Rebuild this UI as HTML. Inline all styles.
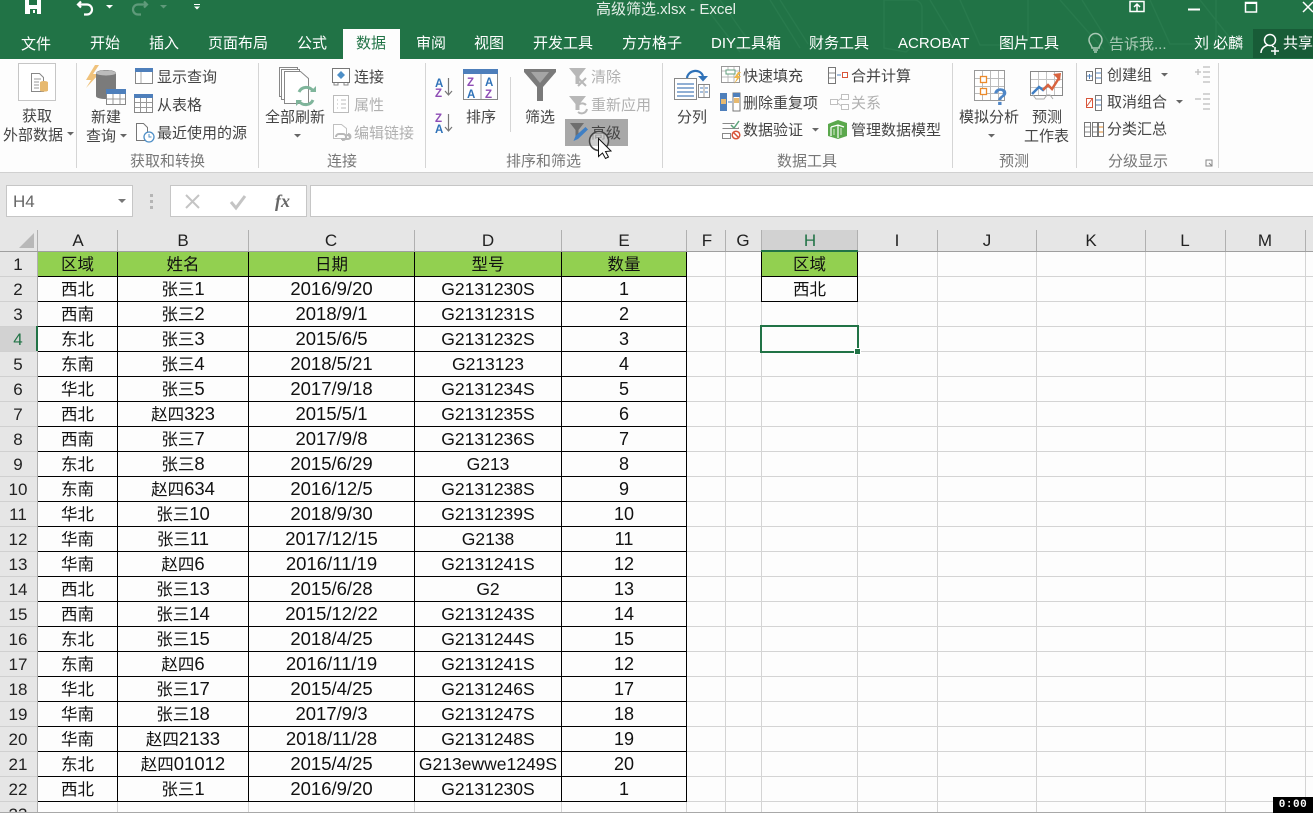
<!DOCTYPE html>
<html lang="zh"><head><meta charset="utf-8"><title>高级筛选.xlsx - Excel</title>
<style>
html,body{margin:0;padding:0;width:1313px;height:813px;overflow:hidden;background:#fdfdfd}
body{position:relative;font-family:"Liberation Sans","Noto Sans CJK SC",sans-serif}
.a{position:absolute}
svg.full{position:absolute;left:0;top:0}
svg text{font-family:"Liberation Sans","Noto Sans CJK SC",sans-serif}
.t{font-size:15px;fill:#444}
.g{font-size:15px;fill:#b0b0b0}
.l{font-size:15px;fill:#777}
.w{font-size:15px;fill:#fff}
.h{font-size:17px;fill:#222;text-anchor:middle}
table{border-collapse:separate;border-spacing:0;table-layout:fixed;position:absolute}
tr{height:25px}
td{box-sizing:border-box;height:25px;padding:0;border-right:1px solid #000;border-bottom:1px solid #000;text-align:center;vertical-align:middle;line-height:20px;font-size:18.500px;color:#111;white-space:nowrap;overflow:hidden}
td b{font-weight:normal;font-size:16.500px;line-height:16px;font-family:"Noto Sans CJK SC",sans-serif}
td.d{font-size:17.500px}
td.e{font-size:18px}
tr.top td{background:#92d050}
</style></head><body>
<div class="a" style="left:0;top:0;width:1313px;height:59px;background:#217346"></div>
<div class="a" style="left:343px;top:29px;width:57px;height:30px;background:#fdfdfd"></div>
<div class="a" style="left:1253px;top:29px;width:60px;height:29px;background:#185c37"></div>
<div class="a" style="left:0;top:59px;width:1313px;height:113px;background:#fdfdfd"></div>
<div class="a" style="left:0;top:172px;width:1313px;height:59px;background:#e6e6e6;border-top:1px solid #d0d0d0;box-sizing:border-box"></div>
<div class="a" style="left:6px;top:185px;width:127px;height:32px;background:#fff;border:1px solid #c6c6c6;box-sizing:border-box"></div>
<div class="a" style="left:170px;top:185px;width:137px;height:32px;background:#fff;border:1px solid #c6c6c6;box-sizing:border-box"></div>
<div class="a" style="left:310px;top:185px;width:1003px;height:32px;background:#fff;border:1px solid #c6c6c6;border-right:0;box-sizing:border-box"></div>
<div class="a" style="left:0;top:251px;width:37px;height:561px;background:#e6e6e6"></div>
<div class="a" style="left:0;top:230px;width:1313px;height:21px;background:#e6e6e6"></div>
<div class="a" style="left:761px;top:230px;width:97px;height:21px;background:#d2d2d2"></div>
<div class="a" style="left:0;top:326px;width:37px;height:25px;background:#d2d2d2"></div>
<div class="a" style="left:38px;top:252px;width:1275px;height:560px;background:repeating-linear-gradient(to bottom,transparent 0,transparent 24px,#d4d4d4 24px,#d4d4d4 25px)"></div>

<svg class="full" width="1313" height="813" viewBox="0 0 1313 813">
<!-- title texture -->
<g fill="none" stroke="#287a4d" stroke-width="1.500">
<path d="M770 0L800 48M780 0L808 44M884 0h30a8 8 0 0 1 8 8v30l-16 14-22-4zM930 0l30 50M960 0l20 45h40a8 8 0 0 0 8-8V0M1060 0l44 50M1082 0l30 48M1150 0l20 44h40a6 6 0 0 0 6-6V0M1200 0l30 38M700 0l40 52M720 0l28 40"/>
</g>
<!-- QAT -->
<path d="M25 0h16v14H25z" fill="#fff"/><path d="M29 0h8v5h-8zM30 9h7v5h-7z" fill="#217346"/><rect x="33" y="10" width="2" height="3" fill="#fff"/>
<path d="M81 1.500l-3 3 3 3M79 4.500h8a5 5 0 0 1 0 10h-3" fill="none" stroke="#fff" stroke-width="2.200"/>
<path d="M106 5h7l-3.500 3.500z" fill="#fff"/>
<path d="M144 1.500l3 3-3 3M146 4.500h-8a5 5 0 0 0 0 10h3" fill="none" stroke="#5f9a7a" stroke-width="2.200"/>
<path d="M160 5h7l-3.500 3.500z" fill="#5f9a7a"/>
<path d="M194 4h6v1h-6zM194 6.500h6l-3 3z" fill="#fff"/>
<text x="596" y="14" style="font-size:15px;fill:#e6efe9">高级筛选.xlsx - Excel</text>
<!-- window controls -->
<g fill="none" stroke="#fff" stroke-width="1.500"><rect x="1130" y="1.500" width="14" height="10"/><path d="M1137 11V5M1134 7l3-3 3 3"/><rect x="1245.500" y="2.500" width="11" height="9.500"/><path d="M1303 2l10 10M1313 2l-10 10"/></g>
<rect x="1188" y="8.500" width="12" height="2" fill="#fff"/><rect x="1245" y="2" width="12" height="2" fill="#fff"/>
<!-- tabs -->
<text class="w" x="21" y="49">文件</text><text class="w" x="90" y="48">开始</text><text class="w" x="149" y="48">插入</text><text class="w" x="208" y="48">页面布局</text><text class="w" x="297" y="48">公式</text>
<text x="356" y="48" style="font-size:15px;fill:#217346">数据</text>
<text class="w" x="416" y="48">审阅</text><text class="w" x="474" y="48">视图</text><text class="w" x="533" y="48">开发工具</text><text class="w" x="622" y="48">方方格子</text><text class="w" x="711" y="48">DIY工具箱</text><text class="w" x="809" y="48">财务工具</text><text class="w" x="898" y="48">ACROBAT</text><text class="w" x="999" y="48">图片工具</text>
<text x="1109" y="49" style="font-size:15px;fill:#a9c9b5">告诉我...</text>
<text class="w" x="1194" y="48">刘 必麟</text><text class="w" x="1283" y="48">共享</text>
<path d="M1092 48c0-3-3-4-3-8a6.500 6.500 0 0 1 13 0c0 4-3 5-3 8zM1093 50h5M1094 52h3" fill="none" stroke="#a9c9b5" stroke-width="1.500"/>
<g fill="none" stroke="#fff" stroke-width="1.500"><circle cx="1270" cy="40" r="5.500"/><path d="M1261 53c0-5 4-7 7-8M1272 46l2 1M1271 51h8M1275 47v8"/></g>
<!-- separators -->
<g stroke="#d5d5d5"><path d="M76.500 63v105M258.500 63v105M425.500 63v105M662.500 63v105M952.500 63v105M1076.500 63v105M1218.500 63v105M510.500 77v55"/></g>
<!-- group labels -->
<text class="l" x="130" y="166">获取和转换</text><text class="l" x="327" y="166">连接</text><text class="l" x="506" y="166">排序和筛选</text><text class="l" x="777" y="166">数据工具</text><text class="l" x="999" y="166">预测</text><text class="l" x="1108" y="166">分级显示</text>
<path d="M1206 160h6v6h-6zM1209 163l3 3" fill="none" stroke="#888"/>
<!-- ribbon text -->
<text class="t" x="22" y="121">获取</text><text class="t" x="3" y="140">外部数据</text><path d="M67 132h7l-3.500 3.500z" fill="#666"/>
<text class="t" x="91" y="122">新建</text><text class="t" x="86" y="141">查询</text><path d="M120 134h7l-3.500 3.500z" fill="#666"/>
<text class="t" x="157" y="82">显示查询</text><text class="t" x="157" y="110">从表格</text><text class="t" x="157" y="138">最近使用的源</text>
<text class="t" x="265" y="122">全部刷新</text><path d="M294 134h7l-3.500 3.500z" fill="#666"/>
<text class="t" x="354" y="82">连接</text><text class="g" x="354" y="110">属性</text><text class="g" x="354" y="138">编辑链接</text>
<text class="t" x="466" y="122">排序</text><text class="t" x="525" y="122">筛选</text>
<text class="g" x="591" y="82">清除</text><text class="g" x="591" y="110">重新应用</text>
<rect x="565" y="119" width="63" height="27" fill="#a8a8a8"/><text x="591" y="138" style="font-size:15px;fill:#444">高级</text>
<text class="t" x="677" y="122">分列</text>
<text class="t" x="743" y="81">快速填充</text><text class="t" x="743" y="108">删除重复项</text><text class="t" x="743" y="135">数据验证</text><path d="M812 128h7l-3.500 3.500z" fill="#666"/>
<text class="t" x="851" y="81">合并计算</text><text class="g" x="851" y="108">关系</text><text class="t" x="851" y="135">管理数据模型</text>
<text class="t" x="959" y="122">模拟分析</text><path d="M988 134h7l-3.500 3.500z" fill="#666"/>
<text class="t" x="1032" y="122">预测</text><text class="t" x="1024" y="141">工作表</text>
<text class="t" x="1107" y="80">创建组</text><path d="M1161 73h7l-3.500 3.500z" fill="#666"/>
<text class="t" x="1107" y="107">取消组合</text><path d="M1176 100h7l-3.500 3.500z" fill="#666"/>
<text class="t" x="1107" y="134">分类汇总</text>
<!-- get external -->
<rect x="18.500" y="63.500" width="37" height="37" fill="#fff" stroke="#c6c6c6"/>
<path d="M31.500 73.500h8l4 4v14h-12z" fill="#fff" stroke="#888"/><path d="M34 79h7M34 82h5M34 85h5M34 88h5" stroke="#999"/>
<path d="M40 82.500c0-2 8-2 8 0v8c0 1.500-8 1.500-8 0z" fill="#e7b96f"/>
<!-- new query -->
<path d="M95 65l-9 15h5l-5 8 13-14h-6l6-9z" fill="#f0c27b"/>
<path d="M96 73c0-4 20-4 20 0v23c0 4-20 4-20 0z" fill="#7b7b7b"/><ellipse cx="106" cy="73" rx="10" ry="2.500" fill="#bbb"/>
<rect x="106.500" y="89.500" width="19" height="15" fill="#fff" stroke="#888"/><rect x="106" y="89" width="20" height="5" fill="#4e7fbb"/><path d="M113 94v10M120 94v10M107 99h18" stroke="#999"/>
<!-- show query -->
<rect x="135.500" y="68.500" width="17" height="15" fill="#fff" stroke="#888"/><rect x="135" y="68" width="18" height="4" fill="#4e7fbb"/><path d="M141 72v11" stroke="#aaa"/>
<!-- from table -->
<rect x="134.500" y="94.500" width="18" height="18" fill="#fff" stroke="#888"/><path d="M140.500 98v14M146.500 98v14M135 102.500h17M135 107.500h17" stroke="#999"/><rect x="134" y="94" width="19" height="4" fill="#4e7fbb"/>
<!-- recent -->
<path d="M136.500 123.500h7l4 4v13h-11z" fill="#fff" stroke="#777"/><circle cx="149" cy="137" r="5" fill="#fff" stroke="#4e8fc7" stroke-width="1.300"/><path d="M149 134v3h2.500" fill="none" stroke="#4e8fc7"/>
<!-- refresh all -->
<g fill="#fff" stroke="#888"><path d="M279.500 67.500h18v29h-18z"/><path d="M281.500 69.500h18v30h-18z"/><path d="M284.500 71.500h16l8 7v25h-24z"/></g>
<path d="M299 92a8 8 0 0 1 14-1M313 100a8 8 0 0 1-14 1" fill="none" stroke="#7fb59b" stroke-width="3"/><path d="M310 92h6v-6zM302 100h-6v6z" fill="#7fb59b"/>
<!-- connections -->
<rect x="332.500" y="68.500" width="17" height="14" fill="#fff" stroke="#777"/><path d="M341 71l4 4-4 4-4-4z" fill="#4e8fc7"/><path d="M334 83v2h4v-2M344 83v2h4v-2" fill="none" stroke="#888"/>
<rect x="333.500" y="95.500" width="15" height="17" fill="#fff" stroke="#bbb"/><path d="M337 100h1M341 100h5M337 104h1M341 104h5M337 108h1M341 108h5" stroke="#bbb"/>
<path d="M333.500 124.500h8l5 4v10h-13z" fill="#fff" stroke="#c0c0c0"/><path d="M336 137a3 3 0 0 1 3-3h4a3 3 0 0 1 0 6h-1M350 138a3 3 0 0 0-3-3" fill="none" stroke="#b8b8b8" stroke-width="2"/><path d="M341 139h7a2.500 2.500 0 0 0 0-5" fill="none" stroke="#b8b8b8" stroke-width="2"/>
<!-- sort small -->
<text x="435" y="87" style="fill:#2f72b8;font-size:11.500px;font-weight:bold">A</text><text x="435" y="97" style="fill:#8e4db5;font-size:11.500px;font-weight:bold">Z</text><text x="435" y="122" style="fill:#8e4db5;font-size:11.500px;font-weight:bold">Z</text><text x="435" y="133" style="fill:#2f72b8;font-size:11.500px;font-weight:bold">A</text>
<path d="M448.500 78v17M445 91l3.500 4 3.500-4M448.500 114v17M445 127l3.500 4 3.500-4" fill="none" stroke="#777" stroke-width="1.200"/>
<!-- sort big -->
<rect x="463.500" y="69.500" width="34" height="30" fill="#fff" stroke="#888"/><rect x="463" y="69" width="35" height="5" fill="#4e7fbb"/><path d="M481 74v25" stroke="#999"/>
<text x="467" y="86" style="fill:#8e4db5;font-size:11.500px;font-weight:bold">Z</text><text x="467" y="98" style="fill:#2f72b8;font-size:11.500px;font-weight:bold">A</text><text x="485" y="86" style="fill:#2f72b8;font-size:11.500px;font-weight:bold">A</text><text x="485" y="98" style="fill:#8e4db5;font-size:11.500px;font-weight:bold">Z</text>
<!-- filter -->
<path d="M524 69h32v3l-13 15v14h-6V87l-13-15z" fill="#7a7a7a"/><path d="M531 72h18l-9 11z" fill="#a5a5a5"/>
<path d="M569 68h17l-6.500 8v8h-4v-8z" fill="#b8b8b8"/><path d="M578 78l8 8M586 78l-8 8" stroke="#b8b8b8" stroke-width="2"/>
<path d="M569 96h17l-6.500 8v6h-4v-6z" fill="#b8b8b8"/><path d="M577 107a5.500 5.500 0 0 1 9-2M587 109a5.500 5.500 0 0 1-9 3" fill="none" stroke="#b8b8b8" stroke-width="2"/>
<path d="M570 123h14l-5.500 7v7h-3v-7z" fill="#6e6e6e"/><path d="M573.500 141l2-5 10-9 2.500 2.500-10 9.500z" fill="#3f7fc4"/>
<circle cx="599" cy="141" r="9.500" fill="#fff" fill-opacity=".45" stroke="#444" stroke-width="1.500"/>
<path d="M598.500 138.500v18l4-3.500 3 5.500 3-1.500-3-5.500 5.500-.5z" fill="#fff" stroke="#111" stroke-width="1"/>
<!-- text to columns -->
<rect x="674.500" y="78.500" width="22" height="21" fill="#fff" stroke="#888"/><path d="M677 84h17M677 88h17M677 92h17M677 96h17" stroke="#4e7fbb" stroke-width="1.200"/>
<rect x="698.500" y="84.500" width="11" height="13" fill="#fff" stroke="#888"/><path d="M704 85v12" stroke="#999"/><path d="M700 88h3M705 88h3M700 92h3M705 92h3" stroke="#4e7fbb"/>
<path d="M687 78c1-8 13-10 16-2" fill="none" stroke="#2f72b8" stroke-width="2.200"/><path d="M698 76h10l-5 5.500z" fill="#2f72b8"/>
<!-- flash fill -->
<rect x="721.500" y="66.500" width="18" height="16" fill="#fff" stroke="#999"/><path d="M722 71h17M722 77h17M728 67v15M734 67v15" stroke="#bbb"/><rect x="726" y="70" width="9" height="4" fill="#fff" stroke="#63a07f"/><path d="M738 72l-4 6h3l-3 6 7-8h-3l3-4z" fill="#eeb64a"/>
<!-- remove duplicates -->
<rect x="720" y="93" width="7" height="18" fill="#4e7fbb"/><rect x="721" y="99" width="5" height="5" fill="#e7b96f"/><rect x="733" y="93" width="7" height="18" fill="#fff" stroke="#777"/><rect x="733" y="93" width="7" height="4" fill="#4e7fbb"/><rect x="734" y="98" width="5" height="5" fill="#e7b96f"/><path d="M728 102h4" stroke="#4e7fbb"/>
<!-- validation -->
<path d="M722.500 123.500h12M722.500 128.500h16v-1M722.500 133.500h8v5h-8z" fill="none" stroke="#888"/><path d="M731 125l3 3 5-7" fill="none" stroke="#5ba37a" stroke-width="1.500"/><circle cx="736" cy="135" r="3.800" fill="#fff" stroke="#d8553a" stroke-width="1.500"/><path d="M733.500 132.500l5 5" stroke="#d8553a" stroke-width="1.500"/>
<!-- consolidate -->
<rect x="828.500" y="67.500" width="7" height="16" fill="#fff" stroke="#777"/><path d="M829 73h6M829 78h6" stroke="#888"/><path d="M837 75h4" stroke="#4e7fbb"/><rect x="842.500" y="72.500" width="5" height="5" fill="#fff" stroke="#d8553a"/>
<!-- relationships -->
<g fill="#fff" stroke="#c0c0c0"><rect x="830.500" y="99.500" width="7" height="5"/><rect x="841.500" y="94.500" width="7" height="5"/><rect x="841.500" y="104.500" width="7" height="5"/><path d="M837.500 101l4-3M837.500 103l4 3"/></g>
<!-- data model -->
<path d="M828 124l10-4 9 3v13l-9 3-10-3z" fill="#5ba84d"/><path d="M838 125v13M831 127l7-2 6 2M831 127v9" fill="none" stroke="#fff" stroke-width="1.200"/><path d="M834 129v6M841 128v7" stroke="#d8ecd0"/>
<!-- what-if -->
<rect x="974.500" y="70.500" width="30" height="30" fill="#fff" stroke="#999"/><path d="M982.500 71v29M990.500 71v29M998.500 71v29M975 78.500h29M975 86.500h29M975 93.500h29" stroke="#bbb"/>
<rect x="980.500" y="76.500" width="6" height="6" fill="#fff" stroke="#ec8a2b" stroke-width="1.300"/><rect x="980.500" y="88.500" width="6" height="6" fill="#fff" stroke="#ec8a2b" stroke-width="1.300"/>
<text x="993" y="105" style="font-size:24px;font-weight:bold;fill:#4e86c6">?</text>
<!-- forecast -->
<rect x="1030.500" y="71.500" width="32" height="24" fill="#fff" stroke="#888"/><path d="M1038.500 72v23M1046.500 72v23M1054.500 72v23M1031 79.500h31M1031 87.500h31" stroke="#c4c4c4"/><path d="M1033 95l3 4h8l3-4h3l3 4" fill="none" stroke="#aaa"/>
<path d="M1032 94l7-7 4 3 5-5" fill="none" stroke="#3f7fc4" stroke-width="2.500"/><path d="M1043 90l5-5 4 4 7-11" fill="none" stroke="#d8633f" stroke-width="2.500"/><path d="M1053 74l8-1-1 8z" fill="#d8633f"/>
<!-- outline -->
<g fill="#fff" stroke="#777"><rect x="1086.500" y="71.500" width="6" height="9"/><rect x="1095.500" y="68.500" width="6" height="15"/><rect x="1086.500" y="98.500" width="6" height="9" stroke="#d8553a"/><rect x="1095.500" y="95.500" width="6" height="15"/></g>
<path d="M1087 76h5M1089.500 74v5M1096 73h5M1096 78h5M1096 100h5M1096 105h5" stroke="#4e7fbb"/><path d="M1087 106l5-7" stroke="#d8553a"/>
<g fill="#fff" stroke="#777"><rect x="1084.500" y="122.500" width="6" height="14"/><rect x="1092.500" y="122.500" width="5" height="14"/><rect x="1098.500" y="122.500" width="5" height="14"/></g>
<path d="M1085 127h5M1085 132h5M1093 127h4M1093 132h4" stroke="#888"/><path d="M1099 127h4M1099 132h4" stroke="#e08a2b"/>
<path d="M1195 72h6M1198 69v6M1195 99h6M1203 67h7M1203 72h7M1203 77h7M1203 82h7M1203 94h7M1203 99h7M1203 104h7M1203 109h7" stroke="#bdbdbd" stroke-width="1.300"/>
<!-- formula bar -->
<text x="13" y="207" style="font-size:17px;fill:#666">H4</text><path d="M118 199h8l-4 4z" fill="#777"/>
<g fill="#b5b5b5"><rect x="150" y="194" width="3" height="3"/><rect x="150" y="200" width="3" height="3"/><rect x="150" y="206" width="3" height="3"/></g>
<path d="M186 195l13 13M199 195l-13 13" stroke="#c4c4c4" stroke-width="2"/><path d="M231 202l5 6 9-12" fill="none" stroke="#c4c4c4" stroke-width="3"/>
<text x="275" y="207" style="font-family:'Liberation Serif',serif;font-size:18px;font-style:italic;font-weight:bold;fill:#666">fx</text>
<!-- headers -->
<path d="M34 233v15H19z" fill="#b8b8b8"/>
<g stroke="#b0b0b0"><path d="M37.500 230v21M117.500 230v21M248.500 230v21M414.500 230v21M561.500 230v21M686.500 230v21M725.500 230v21M761.500 230v21M857.500 230v21M937.500 230v21M1036.500 230v21M1145.500 230v21M1225.500 230v21M1305.500 230v21"/></g>
<rect x="0" y="251" width="1313" height="1" fill="#9f9f9f"/><rect x="761" y="250" width="97" height="2" fill="#217346"/>
<text class="h" x="78" y="246">A</text><text class="h" x="183" y="246">B</text><text class="h" x="331" y="246">C</text><text class="h" x="488" y="246">D</text><text class="h" x="624" y="246">E</text><text class="h" x="707" y="246">F</text><text class="h" x="743" y="246">G</text><text class="h" x="810" y="246" style="fill:#217346">H</text><text class="h" x="897" y="246">I</text><text class="h" x="987" y="246">J</text><text class="h" x="1091" y="246">K</text><text class="h" x="1185" y="246">L</text><text class="h" x="1265" y="246">M</text>
<!-- row numbers -->
<text class="h" x="18" y="270">1</text><text class="h" x="18" y="295">2</text><text class="h" x="18" y="320">3</text><text class="h" x="18" y="345" style="fill:#217346">4</text><text class="h" x="18" y="370">5</text><text class="h" x="18" y="395">6</text><text class="h" x="18" y="420">7</text><text class="h" x="18" y="445">8</text><text class="h" x="18" y="470">9</text><text class="h" x="18" y="495">10</text><text class="h" x="18" y="520">11</text><text class="h" x="18" y="545">12</text><text class="h" x="18" y="570">13</text><text class="h" x="18" y="595">14</text><text class="h" x="18" y="620">15</text><text class="h" x="18" y="645">16</text><text class="h" x="18" y="670">17</text><text class="h" x="18" y="695">18</text><text class="h" x="18" y="720">19</text><text class="h" x="18" y="745">20</text><text class="h" x="18" y="770">21</text><text class="h" x="18" y="795">22</text><text class="h" x="18" y="820">23</text>
<path d="M0 276.500h37M0 301.500h37M0 326.500h37M0 351.500h37M0 376.500h37M0 401.500h37M0 426.500h37M0 451.500h37M0 476.500h37M0 501.500h37M0 526.500h37M0 551.500h37M0 576.500h37M0 601.500h37M0 626.500h37M0 651.500h37M0 676.500h37M0 701.500h37M0 726.500h37M0 751.500h37M0 776.500h37M0 801.500h37" stroke="#d0d0d0"/>
<path d="M37.500 252v560" stroke="#b0b0b0"/><rect x="36" y="326" width="2" height="25" fill="#217346"/>
<!-- gridlines -->
<path d="M725.500 252v560M761.500 252v560M857.500 252v560M937.500 252v560M1036.500 252v560M1145.500 252v560M1225.500 252v560M1305.500 252v560M117.500 802v10M248.500 802v10M414.500 802v10M561.500 802v10M686.500 802v10" stroke="#d4d4d4"/>
</svg>

<table style="left:38px;top:252px;width:649px">
<colgroup><col style="width:80px"><col style="width:131px"><col style="width:166px"><col style="width:147px"><col style="width:125px"></colgroup>
<tr class="top"><td><b>区域</b></td><td><b>姓名</b></td><td><b>日期</b></td><td><b>型号</b></td><td><b>数量</b></td></tr>
<tr><td><b>西北</b></td><td><b>张三</b>1</td><td>2016/9/20</td><td class="d">G2131230S</td><td class="e">1</td></tr>
<tr><td><b>西南</b></td><td><b>张三</b>2</td><td>2018/9/1</td><td class="d">G2131231S</td><td class="e">2</td></tr>
<tr><td><b>东北</b></td><td><b>张三</b>3</td><td>2015/6/5</td><td class="d">G2131232S</td><td class="e">3</td></tr>
<tr><td><b>东南</b></td><td><b>张三</b>4</td><td>2018/5/21</td><td class="d">G213123</td><td class="e">4</td></tr>
<tr><td><b>华北</b></td><td><b>张三</b>5</td><td>2017/9/18</td><td class="d">G2131234S</td><td class="e">5</td></tr>
<tr><td><b>西北</b></td><td><b>赵四</b>323</td><td>2015/5/1</td><td class="d">G2131235S</td><td class="e">6</td></tr>
<tr><td><b>西南</b></td><td><b>张三</b>7</td><td>2017/9/8</td><td class="d">G2131236S</td><td class="e">7</td></tr>
<tr><td><b>东北</b></td><td><b>张三</b>8</td><td>2015/6/29</td><td class="d">G213</td><td class="e">8</td></tr>
<tr><td><b>东南</b></td><td><b>赵四</b>634</td><td>2016/12/5</td><td class="d">G2131238S</td><td class="e">9</td></tr>
<tr><td><b>华北</b></td><td><b>张三</b>10</td><td>2018/9/30</td><td class="d">G2131239S</td><td class="e">10</td></tr>
<tr><td><b>华南</b></td><td><b>张三</b>11</td><td>2017/12/15</td><td class="d">G2138</td><td class="e">11</td></tr>
<tr><td><b>华南</b></td><td><b>赵四</b>6</td><td>2016/11/19</td><td class="d">G2131241S</td><td class="e">12</td></tr>
<tr><td><b>西北</b></td><td><b>张三</b>13</td><td>2015/6/28</td><td class="d">G2</td><td class="e">13</td></tr>
<tr><td><b>西南</b></td><td><b>张三</b>14</td><td>2015/12/22</td><td class="d">G2131243S</td><td class="e">14</td></tr>
<tr><td><b>东北</b></td><td><b>张三</b>15</td><td>2018/4/25</td><td class="d">G2131244S</td><td class="e">15</td></tr>
<tr><td><b>东南</b></td><td><b>赵四</b>6</td><td>2016/11/19</td><td class="d">G2131241S</td><td class="e">12</td></tr>
<tr><td><b>华北</b></td><td><b>张三</b>17</td><td>2015/4/25</td><td class="d">G2131246S</td><td class="e">17</td></tr>
<tr><td><b>华南</b></td><td><b>张三</b>18</td><td>2017/9/3</td><td class="d">G2131247S</td><td class="e">18</td></tr>
<tr><td><b>华南</b></td><td><b>赵四</b>2133</td><td>2018/11/28</td><td class="d">G2131248S</td><td class="e">19</td></tr>
<tr><td><b>东北</b></td><td><b>赵四</b>01012</td><td>2015/4/25</td><td class="d">G213ewwe1249S</td><td class="e">20</td></tr>
<tr><td><b>西北</b></td><td><b>张三</b>1</td><td>2016/9/20</td><td class="d">G2131230S</td><td class="e">1</td></tr>
</table>

<table style="left:761px;top:252px;width:97px">
<colgroup><col style="width:97px"></colgroup>
<tr class="top"><td style="border-left:1px solid #000"><b>区域</b></td></tr>
<tr><td style="border-left:1px solid #000"><b>西北</b></td></tr>
</table>

<div class="a" style="left:760px;top:325px;width:99px;height:28px;border:2px solid #217346;box-sizing:border-box"></div>
<div class="a" style="left:855px;top:349px;width:5px;height:5px;background:#217346;outline:1px solid #fff"></div>

<div class="a" style="left:0;top:812px;width:1313px;height:1px;background:#a8a8a8"></div>
<div class="a" style="left:1273px;top:797px;width:40px;height:16px;background:#000;color:#fff;font:bold 11px/16px 'Liberation Mono',monospace;text-align:center;letter-spacing:.5px">0:00</div>
</body></html>
